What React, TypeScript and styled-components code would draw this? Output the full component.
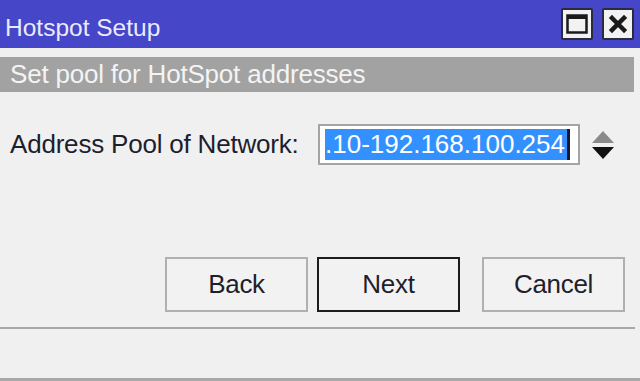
import React from 'react'
import styled, { createGlobalStyle } from 'styled-components'

const GlobalStyle = createGlobalStyle`
  html, body {
    margin: 0;
    padding: 0;
    background: #f0f0f0;
  }
  body {
    font-family: 'Liberation Sans', Arial, sans-serif;
  }
`

const Window = styled.div`
  width: 640px;
  height: 381px;
  display: flex;
  flex-direction: column;
  background: #f0f0f0;
  overflow: hidden;
`

const TitleBar = styled.div`
  height: 48px;
  flex: none;
  display: flex;
  align-items: center;
  justify-content: space-between;
  background: #4646c8;
  padding: 0 6px 0 5px;
`

const Title = styled.div`
  color: #ebebff;
  font-size: 24.5px;
  padding-top: 7px;
`

const WinButtons = styled.div`
  display: flex;
  gap: 9px;
`

const WinButton = styled.div`
  width: 32px;
  height: 32px;
  box-sizing: border-box;
  border: 2px solid #2a2a40;
  border-radius: 2px;
  background: #f2f2f2;
  display: flex;
  align-items: center;
  justify-content: center;
`

const Header = styled.div`
  margin: 9px 6px 0 0;
  height: 35px;
  flex: none;
  background: #a2a2a2;
  color: #f4f4f4;
  font-size: 26px;
  padding-left: 10px;
  display: flex;
  align-items: center;
  letter-spacing: -0.2px;
`

const FormRow = styled.div`
  margin-top: 32px;
  padding-left: 10px;
  display: grid;
  grid-template-columns: 308px 262px auto;
  align-items: center;
`

const Label = styled.div`
  font-size: 26px;
  color: #1e1e2c;
  letter-spacing: -0.2px;
`

const Input = styled.div`
  height: 41px;
  box-sizing: border-box;
  border: 2px solid #a4a4a4;
  background: #fff;
  padding: 3px 8px 3px 5px;
  display: flex;
  align-items: stretch;
`

const Selection = styled.div`
  flex: 1;
  background: #3390ff;
  color: #fff;
  font-size: 26px;
  line-height: 31px;
  border-right: 3px solid #101830;
  white-space: nowrap;
  overflow: hidden;
`

const Spinner = styled.div`
  margin-left: 11px;
  display: flex;
  align-items: center;
`

const ButtonRow = styled.div`
  margin-top: 92px;
  padding-right: 15px;
  display: flex;
  justify-content: flex-end;
`

const Button = styled.div<{ $primary?: boolean; $gap?: number }>`
  width: 143px;
  height: 55px;
  box-sizing: border-box;
  margin-left: ${(p) => p.$gap ?? 0}px;
  border: ${(p) => (p.$primary ? '2px solid #1c1c1c' : '2px solid #b0b0b0')};
  background: #f2f2f2;
  color: #1e1e2c;
  font-size: 26px;
  display: flex;
  align-items: center;
  justify-content: center;
  letter-spacing: -0.3px;
`

const Separator = styled.div`
  margin-top: 15px;
  height: 2px;
  margin-right: 5px;
  background: #a8a8a8;
`

const StatusBar = styled.div`
  flex: 1;
  border-bottom: 3px solid #a8a8a8;
`

export default function App() {
  return (
    <>
      <GlobalStyle />
      <Window>
        <TitleBar>
          <Title>Hotspot Setup</Title>
          <WinButtons>
            <WinButton>
              <svg width="22" height="20" viewBox="0 0 22 20">
                <rect x="1.5" y="1.5" width="19" height="17" fill="none" stroke="#1a1a1a" strokeWidth="2.5" />
                <rect x="1" y="1" width="20" height="4" fill="#1a1a1a" />
              </svg>
            </WinButton>
            <WinButton>
              <svg width="20" height="20" viewBox="0 0 20 20">
                <path d="M4 4 L16 16 M16 4 L4 16" stroke="#1a1a1a" strokeWidth="4.5" strokeLinecap="square" />
              </svg>
            </WinButton>
          </WinButtons>
        </TitleBar>
        <Header>Set pool for HotSpot addresses</Header>
        <FormRow>
          <Label>Address Pool of Network:</Label>
          <Input>
            <Selection>.10-192.168.100.254</Selection>
          </Input>
          <Spinner>
            <svg width="24" height="30" viewBox="0 0 24 30">
              <path d="M12 1 L23 13 L1 13 Z" fill="#8a8a8a" />
              <path d="M1 17 L23 17 L12 29 Z" fill="#111" />
            </svg>
          </Spinner>
        </FormRow>
        <ButtonRow>
          <Button>Back</Button>
          <Button $primary $gap={9}>Next</Button>
          <Button $gap={22}>Cancel</Button>
        </ButtonRow>
        <Separator />
        <StatusBar />
      </Window>
    </>
  )
}
